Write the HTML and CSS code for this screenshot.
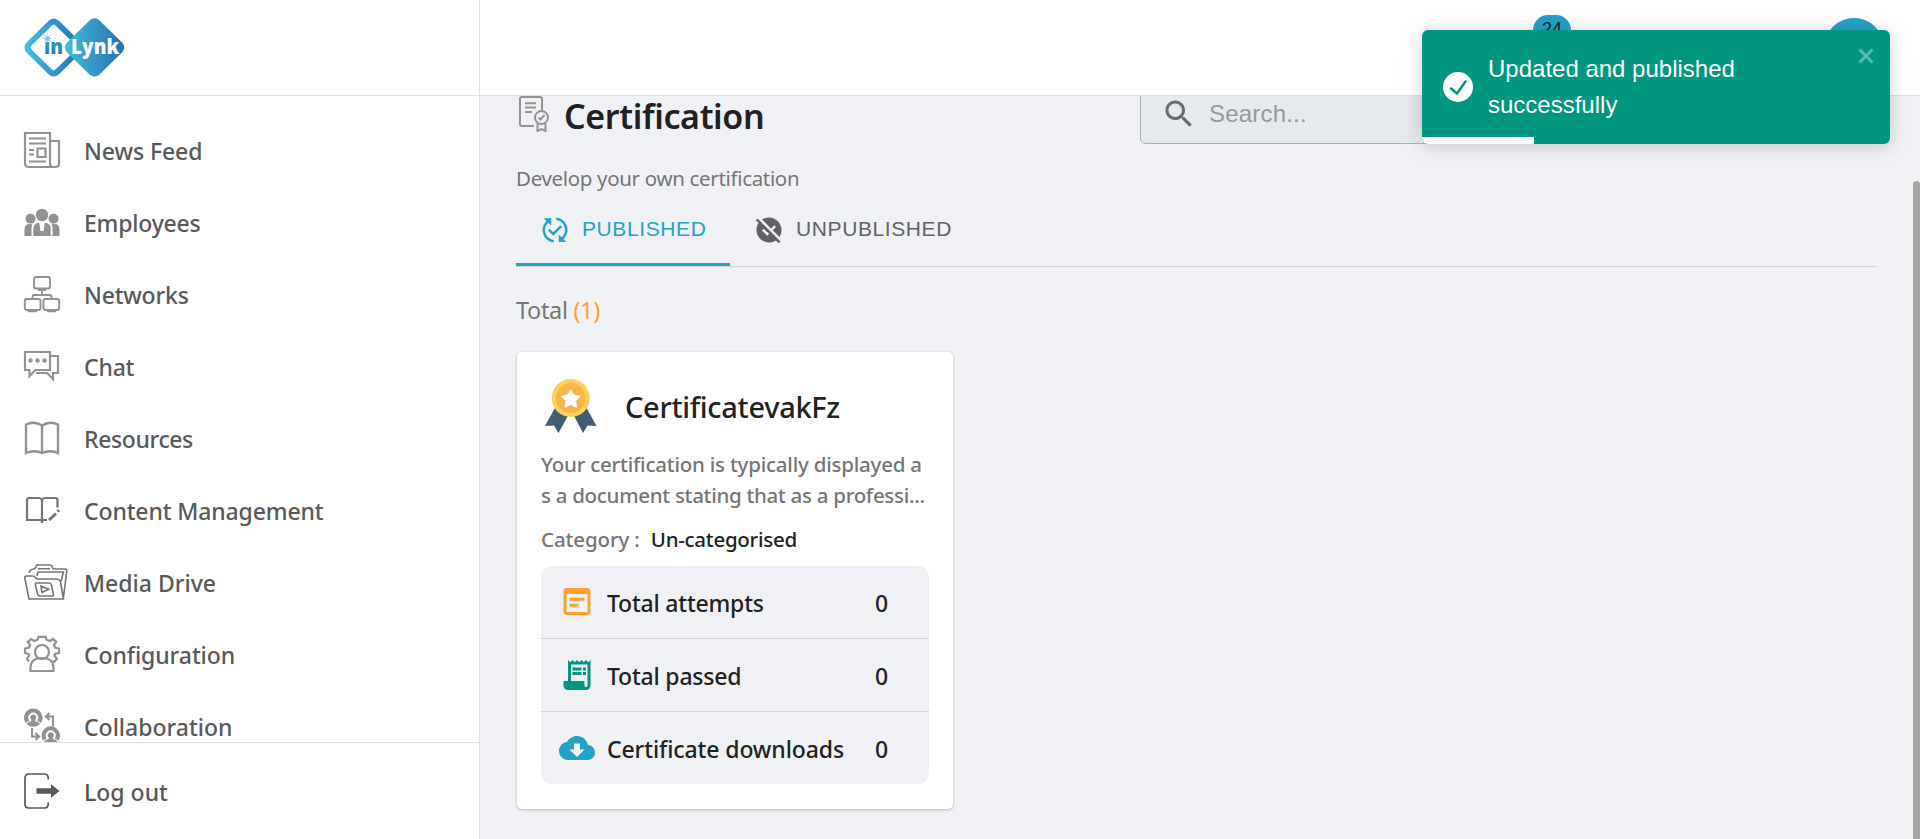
FILE: index.html
```html
<!DOCTYPE html>
<html lang="en">
<head>
<meta charset="utf-8">
<title>Certification</title>
<link rel="stylesheet" href="styles.css">
</head>
<body>
<div class="app">
  <aside class="sidebar">
    <div class="brand">
      <svg class="logo" width="102" height="60" viewBox="0 0 102 60">
        <defs>
          <linearGradient id="ring" x1="0" x2="1"><stop offset="0" stop-color="#42bce0"/><stop offset="1" stop-color="#2670ad"/></linearGradient>
          <linearGradient id="ink" x1="0" x2="0" y1="0" y2="1"><stop offset="0" stop-color="#36b0da"/><stop offset="1" stop-color="#2470ad"/></linearGradient>
        </defs>
        <path d="M26.200 5.200Q29.700 1.900 33.200 5.200L54 25.500Q58 29.500 54 33.500L33.200 53.800Q29.700 57.100 26.200 53.800L5.500 33.500Q1.500 29.500 5.500 25.500Z" fill="#fff" stroke="url(#ring)" stroke-width="5.800"/>
        <path d="M65.500 2.500Q70.500 -1.800 75.500 2.500L98 24.500Q102.500 29.500 98 34.500L75.500 56.500Q70.500 60.800 65.500 56.500L43 34.500Q38.500 29.500 43 24.500Z" fill="url(#ring)"/>
        <circle cx="23.500" cy="20.500" r="2.200" fill="#36b0da"/>
        <g stroke="#8cc6e0" stroke-width=".8"><path d="M23.500 16v9M19 20.500h9M20 17l7 7M27 17l-7 7"/></g>
        <text x="20" y="35.500" textLength="19" lengthAdjust="spacingAndGlyphs" class="logo-in" fill="url(#ink)">ın</text>
        <text x="47" y="35.500" textLength="48" lengthAdjust="spacingAndGlyphs" class="logo-lynk">Lynk</text>
      </svg>
    </div>
    <nav class="menu">
      <a class="item"><svg class="ico" viewBox="0 0 36 36"><g class="ln" stroke-width="2.200"><path d="M1 1h25v30.500q0 3.500 3 3.500H5q-4 0-4-4ZM26 9h9v22.500q0 3.500-4 3.500h-2q-3 0-3-3.500Z"/><path d="M5 6.500h17M5 11.500h17M5 18h5M5 22.500h5M5 29.500h17"/><path d="M13.500 16.500h8v8.500h-8Z"/></g></svg><span class="n1">News Feed</span></a>
      <a class="item"><svg class="ico" viewBox="0 0 36 36"><g class="fl"><circle cx="18" cy="11" r="6.200"/><circle cx="6.500" cy="14.800" r="5"/><circle cx="29.500" cy="14.800" r="5"/><path d="M.5 32v-6.500q0-5.500 5-5.500l3 .3q-1 2-1 5V32ZM35.500 32v-6.500q0-5.500-5-5.500l-3 .3q1 2 1 5V32ZM9.300 32v-7q0-6 6-6.200l.9 7.200v1h3.600v-1l.9-7.200q6 .2 6 6.200v7Z"/></g></svg><span class="n2">Employees</span></a>
      <a class="item"><svg class="ico" viewBox="0 0 36 36"><g class="ln" stroke-width="1.900"><rect x="10" y="1" width="16" height="11.500" rx="2"/><rect x=".8" y="23" width="15.700" height="11" rx="2"/><rect x="19.500" y="23" width="15.700" height="11" rx="2"/><path d="M18 14v5M8.500 22v-1q0-2 2-2h15q2 0 2 2v1M14 14h8M4 35.200h9M23 35.200h9"/></g></svg><span class="n3">Networks</span></a>
      <a class="item"><svg class="ico" viewBox="0 0 36 36"><g class="ln" stroke-width="2.200"><path d="M1 4h25v18H11.500l-6 6v-6H1ZM26 8h8v17h-5v6l-6-6H12"/></g><g class="fl"><circle cx="6.500" cy="12.500" r="2.200"/><circle cx="13.500" cy="12.500" r="2.200"/><circle cx="20.500" cy="12.500" r="2.200"/></g></svg><span class="n4">Chat</span></a>
      <a class="item"><svg class="ico" viewBox="0 0 36 36"><path class="ln" stroke-width="2.400" d="M18 5.500Q10 .5 2 4.500V33q8-3.500 16 0 8-3.500 16 0V4.500Q26 .5 18 5.500V33"/></svg><span class="n5">Resources</span></a>
      <a class="item"><svg class="ico dark" viewBox="0 0 36 36"><g class="ln" stroke-width="2.200"><path d="M18 8V31M18 7.500q-1.500-1.500-3.500-1.500H5q-2 0-2 2V28h13q2 0 2 2 0-2 2-2h3M18 7.500q1.500-1.500 3.500-1.500H31q2.500 0 2.500 2V15.500"/><path stroke-width="3" d="M25 28l7-6.500M33.500 19.500l1.500-1.400"/></g></svg><span class="n6">Content Management</span></a>
      <a class="item"><svg class="ico wide" viewBox="0 0 44 36"><g class="ln mid" stroke-width="1.600"><path d="M5 35L.8 14q-.3-2 1.700-2h6q2 0 3 1.500t3 1.500h18q3.500 0 4 3l3 17ZM5.500 9q0-3.500 3.500-3.800 2.500-.2 3-2.500T14 1h12q2 0 2.300 2t2.200 2H41q2 0 1.700 2.500L39.500 33"/><path d="M14 4.800h12M13 12l1-4h25.500l-2.500 9M11 19h14q2 0 2.500 2l2 10q.2 1-1 1H16q-2 0-2.500-2l-2-9q-.5-2 1-2ZM17 22l7.500 3.300L18 28.500Z"/></g></svg><span class="n7">Media Drive</span></a>
      <a class="item"><svg class="ico" viewBox="0 0 36 36"><g class="ln" stroke-width="2.200"><path d="M5 25.500L3 23l2-3.500-.5-1.500L1 17v-4.500l4-1L6 9 3.800 6 7 3l3.500 2 3-1.300L14.500.800h7l1 2.900L26 5l3-2 3.200 3L30 9l1 2.500 4 1V17l-4 1-.5 1.500L33 23l-3 3-2-.8"/><circle cx="18" cy="16" r="7"/><path d="M6.500 35v-3.500Q7 22 18 22t11.500 9.500V35Z"/></g></svg><span class="n8">Configuration</span></a>
      <a class="item"><svg class="ico" viewBox="0 0 36 36"><g class="fl"><path id="person" d="M1.500 15A9.300 9.300 0 1 1 17 15L13.200 12.500a4.900 4.900 0 1 0-7.900 0ZM9.300 6.500a3 3 0 0 1 2 5.300v1.500q4.500 1 4.500 3-6.500 5-13 0 0-2 4.500-3v-1.500a3 3 0 0 1 2-5.300Z"/><use href="#person" x="17.500" y="17.800"/></g><path class="ln" stroke-width="2.100" d="M22.500 8.500H29v10M25.500 5L22 8.500l3.500 3.500M8 20v8.500h6M11.500 25l3.500 3.500-3.500 3.500"/></svg><span class="n9">Collaboration</span></a>
    </nav>
    <div class="logout">
      <a class="item"><svg class="ico" viewBox="0 0 36 36"><path fill="none" stroke="#58595b" stroke-width="1.700" d="M24.200 6.500V5q0-4-4-4H5Q1 1 1 5v26q0 4 4 4h15.200q4 0 4-4v-1.500"/><path fill="#58595b" d="M12.500 15.200H27v-4l8.500 6.800-8.500 6.800v-4H12.500Z"/></svg><span class="n10">Log out</span></a>
    </div>
  </aside>
  <main class="main">
    <header class="topbar"><span class="badge">24</span><span class="avatar"></span></header>
    <div class="scroll">
      <div class="content">
        <div class="heading">
          <svg class="cert" width="36" height="36" viewBox="0 0 36 36"><g fill="none" stroke="#929292" stroke-width="2"><path d="M18 30H6q-2 0-2-2V3q0-2 2-2h18q2 0 2 2v12"/><path d="M9 7.200h11M9 11.500h11M9 16h7"/><circle cx="25.500" cy="21.500" r="6.500"/><path d="M22.500 21.500l2 2 4-4.500M21.500 27.500V35l4-2 4 2v-7.500"/></g></svg>
          <h1>Certification</h1>
          <div class="search"><svg width="36" height="36" viewBox="0 0 24 24" fill="#6b6b6d"><path d="M15.500 14h-.79l-.28-.27C15.410 12.590 16 11.110 16 9.500 16 5.910 13.090 3 9.500 3S3 5.910 3 9.500 5.910 16 9.500 16c1.610 0 3.090-.59 4.230-1.570l.27.28v.79l5 4.990L20.490 19l-4.990-5zm-6 0C7.010 14 5 11.990 5 9.500S7.010 5 9.500 5 14 7.010 14 9.500 11.990 14 9.500 14z"/></svg><span>Search...</span></div>
        </div>
        <p class="lead"><span>Develop your own certification</span></p>
        <div class="tabs">
          <div class="tab active"><svg width="30" height="30" viewBox="0 0 24 24" fill="currentColor"><path d="M17.660 9.530l-7.070 7.070-4.240-4.240 1.410-1.410 2.830 2.830 5.660-5.660 1.410 1.410zM4 12c0-2.330 1.020-4.420 2.620-5.880L9 8.500v-6H3l2.200 2.200C3.240 6.520 2 9.110 2 12c0 5.190 3.950 9.450 9 9.950v-2.020c-3.940-.49-7-3.860-7-7.930zm18 0c0-5.190-3.950-9.450-9-9.950v2.020c3.940.49 7 3.860 7 7.930 0 2.330-1.020 4.420-2.620 5.880L15 15.500v6h6l-2.200-2.200c1.960-1.820 3.200-4.410 3.200-7.300z"/></svg><span>PUBLISHED</span></div>
          <div class="tab"><svg width="30" height="30" viewBox="0 0 24 24" fill="currentColor"><path d="M21.190 21.190L2.810 2.810 1.390 4.220l2.270 2.270C2.610 8.070 2 9.960 2 12c0 5.520 4.480 10 10 10 2.040 0 3.930-.61 5.510-1.660l2.270 2.270 1.410-1.420zm-10.600-4.590l-4.240-4.240 1.410-1.410 2.830 2.830.18-.18 1.410 1.410-1.590 1.590zm3-5.840l-7.100-7.100C8.070 2.610 9.960 2 12 2c5.520 0 10 4.480 10 10 0 2.040-.61 3.930-1.660 5.510l-5.340-5.340 2.650-2.650-1.410-1.410-2.650 2.650z"/></svg><span>UNPUBLISHED</span></div>
        </div>
        <p class="total">Total <b>(1)</b></p>
        <section class="card">
          <div class="card-head">
            <svg width="52" height="54" viewBox="0 0 52 54"><path fill="#445c70" d="M10.500 28L0 47l9-.5L13.500 54 24 35ZM41 28L51.500 47l-9-.5L38 54 28 35Z"/><circle cx="25.800" cy="19" r="19" fill="#fed05b"/><circle cx="25.800" cy="19" r="15" fill="#f9b54c"/><path fill="#fff" stroke="#fff" stroke-linejoin="round" d="M25.800 10.500l2.900 5.500 6.500 1.200-4.500 4.600.8 6.500-5.700-2.800-5.700 2.800.8-6.500-4.500-4.600 6.500-1.200Z"/></svg>
            <h2>CertificatevakFz</h2>
          </div>
          <p class="desc"><span class="d1">Your certification is typically displayed a</span><br><span class="d2">s a document stating that as a professi...</span></p>
          <p class="cat"><span class="c1">Category :</span><span class="c2">Un-categorised</span></p>
          <ul class="stats">
            <li><svg width="36" height="36" viewBox="0 0 24 24" fill="#ff9f2e"><path d="M19 2.700H5c-1.110 0-2 .9-2 2v14c0 1.100.89 2 2 2h14c1.100 0 2-.9 2-2v-14c0-1.100-.9-2-2-2zm0 16H5v-12h14v12zm-2-7.500H7v-2h10v2zm-4 4H7v-2h6v2z"/></svg><span class="s1">Total attempts</span><em>0</em></li>
            <li><svg width="36" height="36" viewBox="0 0 24 24" fill="#009680"><path d="M19.500 3.500L18 2l-1.500 1.500L15 2l-1.500 1.500L12 2l-1.500 1.500L9 2 7.500 3.500 6 2v14H3v3c0 1.660 1.340 3 3 3h12c1.660 0 3-1.340 3-3V2l-1.500 1.500zM19 19c0 .55-.45 1-1 1s-1-.45-1-1v-3H8V5h11v14z"/><path d="M9 7h6v2H9zM16 7h2v2h-2zM9 10h6v2H9zM16 10h2v2h-2z"/></svg><span class="s1">Total passed</span><em>0</em></li>
            <li><svg width="36" height="36" viewBox="0 0 24 24" fill="#24a3c7"><path d="M19.350 10.040C18.670 6.590 15.640 4 12 4 9.110 4 6.600 5.640 5.350 8.040 2.340 8.360 0 10.910 0 14c0 3.310 2.690 6 6 6h13c2.760 0 5-2.240 5-5 0-2.640-2.050-4.780-4.650-4.960zM17 13l-5 5-5-5h3V9h4v4h3z"/></svg><span class="s3">Certificate downloads</span><em>0</em></li>
          </ul>
        </section>
      </div>
      <div class="track"><div class="thumb"></div></div>
    </div>
  </main>
</div>
<div class="toast">
  <svg width="30" height="30" viewBox="0 0 30 30"><circle cx="15" cy="15" r="15" fill="#fff"/><path d="M8 16.500l6 5L22.500 9.500" fill="none" stroke="#009680" stroke-width="2.600" stroke-linecap="round" stroke-linejoin="round"/></svg>
  <p>Updated and published<br>successfully</p>
  <svg class="close" width="16" height="16" viewBox="0 0 16 16"><path d="M1.500 1.500l13 13M14.500 1.500l-13 13" stroke="#5bbbad" stroke-width="2.800"/></svg>
  <div class="progress"></div>
</div>
</body>
</html>
```
FILE: styles.css
```css
* { box-sizing: border-box; margin: 0; padding: 0; }
body { width: 1920px; height: 839px; overflow: hidden; font-family: "Noto Sans", "Open Sans", sans-serif; color: #212121; background: #fff; }
.app { display: flex; height: 839px; }
.sidebar { width: 480px; flex: none; display: flex; flex-direction: column; border-right: 1px solid #e0e0e0; background: #fff; }
.brand { height: 96px; flex: none; border-bottom: 1px solid #e0e0e0; padding: 18px 0 0 24px; }
.logo { display: block; }
.logo-in, .logo-lynk { font-family: "Open Sans", sans-serif; font-weight: 800; font-size: 20.5px; }
.logo-lynk { fill: #fff; }
.menu { flex: 1; overflow: hidden; padding-top: 19px; }
.item { display: flex; align-items: center; height: 72px; padding: 0 0 3px 24px; font-size: 23px; font-weight: 500; color: #58595b; white-space: nowrap; }
.menu .item { padding-bottom: 2px; }
.item span { padding-top: 2px; }
.n1, .n8 { letter-spacing: -.08px; }
.n2, .n3, .n4 { letter-spacing: -.2px; }
.n5 { letter-spacing: -.38px; }
.n6 { letter-spacing: -.13px; }
.ico { width: 36px; height: 36px; flex: none; overflow: visible; margin-right: 24px; }
.wide { width: 44px; margin-right: 16px; }
.ln { fill: none; stroke: #929292; }
.dark .ln { stroke: #757575; }
.mid { stroke: #777; }
.fl { fill: #929292; }
.logout { height: 97px; flex: none; border-top: 1px solid #e0e0e0; padding-top: 13px; }
.main { flex: 1; display: flex; flex-direction: column; background: #f0f1f5; }
.topbar { height: 96px; flex: none; display: flex; align-items: flex-start; justify-content: flex-end; background: #fff; border-bottom: 1px solid #e0e0e0; padding-right: 36px; }
.badge { width: 38px; height: 30px; margin: 15px 253px 0 0; border-radius: 15px; background: #24a3c7; font: 18px/28px "Liberation Sans", Arial, sans-serif; text-align: center; }
.avatar { width: 60px; height: 60px; margin-top: 18px; border-radius: 50%; background: #24a3c7; }
.scroll { flex: 1; display: flex; overflow: hidden; }
.content { flex: 1; padding: 0 36px; }
.track { width: 7px; background: #f1f1f1; padding-top: 85px; }
.thumb { height: 660px; border-radius: 4px 4px 0 0; background: #a3a6a3; }
.heading { display: flex; height: 48px; }
.cert { flex: none; }
h1 { font-size: 34px; font-weight: 600; line-height: 40px; width: 200px; margin-left: 12px; letter-spacing: -.37px; white-space: nowrap; }
.search { display: flex; align-items: center; margin: -24px 0 0 auto; height: 72px; width: 737px; border: 1px solid #aeb2b8; border-radius: 6px; background: #e6e9ed; padding: 12px 0 0 20px; font: 24px/28px "Liberation Sans", Arial, sans-serif; color: #97999c; }
.search span { margin: -1px 0 0 12px; letter-spacing: .2px; }
.lead { height: 49px; padding-top: 19px; font-size: 20.5px; line-height: 30px; letter-spacing: -.33px; color: #757575; white-space: nowrap; }
.tabs { display: flex; height: 74px; border-bottom: 1px solid #d2d3d7; }
.tab { display: flex; align-items: center; height: 73px; width: 214px; padding: 0 0 1px 24px; color: #616264; font: 21px/24px "Liberation Sans", Arial, sans-serif; letter-spacing: .6px; white-space: nowrap; }
.tab svg { flex: none; margin: 1px 12px 0 0; }
.tab.active { color: #24a3c7; border-bottom: 3px solid #24a3c7; padding: 2px 0 0 24px; }
.total { font-size: 23.5px; line-height: 30px; height: 85px; padding-top: 28px; letter-spacing: -.35px; color: #757575; white-space: nowrap; }
.total b { font-weight: 400; color: #ff9f2e; }
.card { width: 436px; height: 457px; margin-left: 1px; padding: 27px 24px 0; background: #fff; border-radius: 5px; box-shadow: 0 1px 3px rgba(30,40,60,.3); }
.card-head { display: flex; padding-left: 4px; height: 72px; }
h2 { font-size: 29px; font-weight: 500; line-height: 40px; margin: 8px 0 0 28px; letter-spacing: -.3px; white-space: nowrap; }
.desc { margin: -2px 0 2px; font-size: 20.5px; font-weight: 500; line-height: 31px; color: #757575; white-space: nowrap; }
.d1 { letter-spacing: -.22px; }
.d2 { letter-spacing: -.29px; }
.c2 { letter-spacing: -.27px; }
.cat { display: flex; gap: 11px; font-size: 20.5px; font-weight: 500; line-height: 30px; height: 53px; padding-top: 11px; white-space: nowrap; }
.c1 { color: #757575; letter-spacing: -.12px; }
.stats { list-style: none; height: 218px; border-radius: 11px; background: #f0f1f5; }
.stats li { display: flex; align-items: center; height: 73px; padding: 0 40px 0 18px; border-bottom: 1px solid #d2d3d7; font-size: 23px; font-weight: 500; white-space: nowrap; }
.stats li:last-child { border: 0; height: 72px; }
.stats svg { margin-right: 12px; }
.s1 { letter-spacing: -.2px; }
.s3 { letter-spacing: -.1px; }
.stats span, .stats em { padding-top: 2px; }
.stats em { font-style: normal; margin-left: auto; width: 14px; }
.toast { position: absolute; left: 1422px; top: 30px; width: 468px; height: 114px; border-radius: 6px; overflow: hidden; background: #009680; color: #fff; box-shadow: 0 1px 15px rgba(0,0,0,.12), 0 3px 30px rgba(0,0,0,.08); display: flex; padding: 21px 20px; font: 24px/36px "Liberation Sans", Arial, sans-serif; white-space: nowrap; }
.toast > svg { flex: none; margin: 21px 15px 0 1px; }
.toast .close { margin: -3px -4px 0 auto; }
.progress { position: absolute; left: 0; bottom: 0; width: 112px; height: 7px; background: #fff; }
```
